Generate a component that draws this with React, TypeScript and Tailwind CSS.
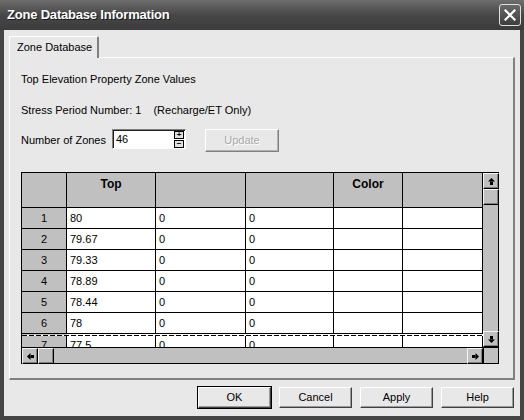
import React from 'react';

const rows = [
  ['1', '80'],
  ['2', '79.67'],
  ['3', '79.33'],
  ['4', '78.89'],
  ['5', '78.44'],
  ['6', '78'],
];

const widthClass = ['w-[45px]', 'w-[89px]', 'w-[90px]', 'w-[88px]', 'w-[69px]', 'w-[80px]'];

function Arrow({ dir }: { dir: 'up' | 'down' | 'left' | 'right' }) {
  const rot = dir === 'up' ? 0 : dir === 'right' ? 90 : dir === 'down' ? 180 : 270;
  return (
    <svg width="7" height="7" viewBox="0 0 7 7" style={{ transform: `rotate(${rot}deg)` }}>
      <path d="M3.5 0 L7 3.5 L0 3.5 Z" fill="#000" />
      <rect x="2" y="3.5" width="3" height="3.5" fill="#000" />
    </svg>
  );
}

function ScrollBtn({ children }: { children?: React.ReactNode }) {
  return (
    <div className="w-[16px] h-[16px] shrink-0 flex items-center justify-center bg-[#c0c0c0] border border-t-[#f4f4f4] border-l-[#f4f4f4] border-r-black border-b-black shadow-[inset_-1px_-1px_0_#808080]">
      {children}
    </div>
  );
}

function WinButton({ label, def }: { label: string; def?: boolean }) {
  return (
    <div className={def ? 'border border-black' : 'border border-transparent'}>
      <div className="w-[73px] h-[21px] flex items-center justify-center bg-[#e8e8e8] border border-t-white border-l-white border-r-[#404040] border-b-[#404040] shadow-[inset_-1px_-1px_0_#9a9a9a] text-[11px] text-black">
        {label}
      </div>
    </div>
  );
}

function Cell({ w, text, gray }: { w: string; text?: string; gray?: boolean }) {
  return (
    <div
      className={`${w} shrink-0 border-r border-b border-black flex items-center text-black ${
        gray ? 'bg-[#c0c0c0] justify-center' : 'bg-white pl-[3px]'
      }`}
    >
      {text}
    </div>
  );
}

function Grid() {
  return (
    <div className="w-[478px] h-[192px] border border-black flex flex-col bg-[#c0c0c0] text-[11px] text-black">
      <div className="flex h-[174px]">
        <div className="w-[461px] overflow-hidden flex flex-col bg-white">
          <div className="flex h-[35px] shrink-0">
            {['', 'Top', '', '', 'Color', ''].map((h, i) => (
              <div
                key={i}
                className={`${widthClass[i]} h-[35px] shrink-0 bg-[#c0c0c0] border-r border-b border-black flex justify-center pt-[2px] font-bold text-[12px]`}
              >
                {h}
              </div>
            ))}
          </div>
          {rows.map(([n, v]) => (
            <div key={n} className="flex h-[21px] shrink-0">
              <Cell w="w-[45px]" text={n} gray />
              <Cell w="w-[89px]" text={v} />
              <Cell w="w-[90px]" text="0" />
              <Cell w="w-[88px]" text="0" />
              <Cell w="w-[69px]" />
              <Cell w="w-[80px]" />
            </div>
          ))}
          <div className="flex h-[1px] shrink-0">
            <div className="w-[45px] bg-[#c0c0c0]" />
          </div>
          <div className="h-[1px] shrink-0 bg-[repeating-linear-gradient(90deg,#000_0_5px,transparent_5px_7px)]" />
          <div className="flex h-[21px] shrink-0 text-black">
            <div className="w-[45px] shrink-0 bg-[#c0c0c0] border-r border-black flex justify-center pt-[1px]">7</div>
            <div className="w-[89px] shrink-0 border-r border-black pl-[3px] pt-[1px]">77.5</div>
            <div className="w-[90px] shrink-0 border-r border-black pl-[3px] pt-[1px]">0</div>
            <div className="w-[88px] shrink-0 border-r border-black pl-[3px] pt-[1px]">0</div>
            <div className="w-[69px] shrink-0 border-r border-black" />
            <div className="w-[80px] shrink-0 border-r border-black" />
          </div>
        </div>
        <div className="w-[15px] flex flex-col bg-[#c0c0c0]">
          <ScrollBtn>
            <Arrow dir="up" />
          </ScrollBtn>
          <ScrollBtn />
          <div className="flex-1" />
          <ScrollBtn>
            <Arrow dir="down" />
          </ScrollBtn>
        </div>
      </div>
      <div className="flex h-[16px] border-t border-black">
        <div className="w-[461px] flex">
          <ScrollBtn>
            <Arrow dir="left" />
          </ScrollBtn>
          <ScrollBtn />
          <div className="flex-1" />
          <ScrollBtn>
            <Arrow dir="right" />
          </ScrollBtn>
        </div>
        <div className="flex-1 border-l border-black" />
      </div>
    </div>
  );
}

export default function App() {
  return (
    <div className="w-[524px] h-[420px] bg-[#454545] flex flex-col font-['Liberation_Sans',Arial,sans-serif] select-none">
      <div className="h-[30px] shrink-0 flex items-center justify-between pl-[7px] pr-[3px] bg-gradient-to-b from-[#6e6e6e] via-[#474747] to-[#3c3c3c]">
        <span className="text-white font-bold text-[13px] tracking-[-0.2px] [text-shadow:1px_1px_0_#1a1a1a]">Zone Database Information</span>
        <div className="w-[22px] h-[22px] rounded-[3px] border border-[#e0e0e0] bg-gradient-to-b from-[#6a6a6a] to-[#3e3e3e] flex items-center justify-center">
          <svg width="12" height="12" viewBox="0 0 12 12">
            <path d="M1.5 1.5 L10.5 10.5 M10.5 1.5 L1.5 10.5" stroke="#fff" strokeWidth="2.2" strokeLinecap="square" />
          </svg>
        </div>
      </div>
      <div className="flex-1 mx-[4px] mb-[4px] bg-[#e8e8e8] flex flex-col pt-[6px] pl-[5px] pr-[5px]">
        <div className="flex">
          <div className="relative z-10 -mb-px h-[22px] w-[90px] bg-[#e8e8e8] border-t border-l border-white border-r-2 border-r-[#808080] rounded-t-[2px] flex items-center pl-[7px] text-[11px] whitespace-nowrap text-black">
            Zone Database
          </div>
        </div>
        <div className="h-[323px] w-[506px] border-t border-l border-white border-r-2 border-r-[#808080] border-b-2 border-b-[#808080] flex flex-col pl-[11px] text-[11px] text-black">
          <div className="mt-[15px] leading-[13px]">Top Elevation Property Zone Values</div>
          <div className="mt-[18px] leading-[13px] flex">
            <span>Stress Period Number: 1</span>
            <span className="ml-[12px]">(Recharge/ET Only)</span>
          </div>
          <div className="mt-[12px] flex items-start h-[23px]">
            <span className="mt-[5px] leading-[13px] w-[91px] whitespace-nowrap">Number of Zones</span>
            <div className="w-[74px] h-[20px] bg-white border border-t-[#808080] border-l-[#808080] border-r-white border-b-white shadow-[inset_1px_1px_0_#202020] flex items-center justify-between pl-[3px] pr-[1px]">
              <span className="text-[11px] text-black">46</span>
              <div className="flex flex-col gap-[1px]">
                <div className="w-[10px] h-[8px] bg-[#e0e0e0] border border-black flex items-center justify-center text-[8px] leading-none font-bold">+</div>
                <div className="w-[10px] h-[8px] bg-[#e0e0e0] border border-black flex items-center justify-center text-[8px] leading-none font-bold">−</div>
              </div>
            </div>
            <div className="ml-[19px] w-[74px] h-[23px] bg-[#e8e8e8] border border-t-white border-l-white border-r-[#808080] border-b-[#808080] shadow-[inset_-1px_-1px_0_#b0b0b0] flex items-center justify-center text-[11px] text-[#a8a8a8] [text-shadow:1px_1px_0_#ffffff]">
              Update
            </div>
          </div>
          <div className="mt-[20px]">
            <Grid />
          </div>
        </div>
        <div className="flex justify-end gap-[6px] mt-[6px]">
          <WinButton label="OK" def />
          <WinButton label="Cancel" />
          <WinButton label="Apply" />
          <WinButton label="Help" />
        </div>
      </div>
    </div>
  );
}
